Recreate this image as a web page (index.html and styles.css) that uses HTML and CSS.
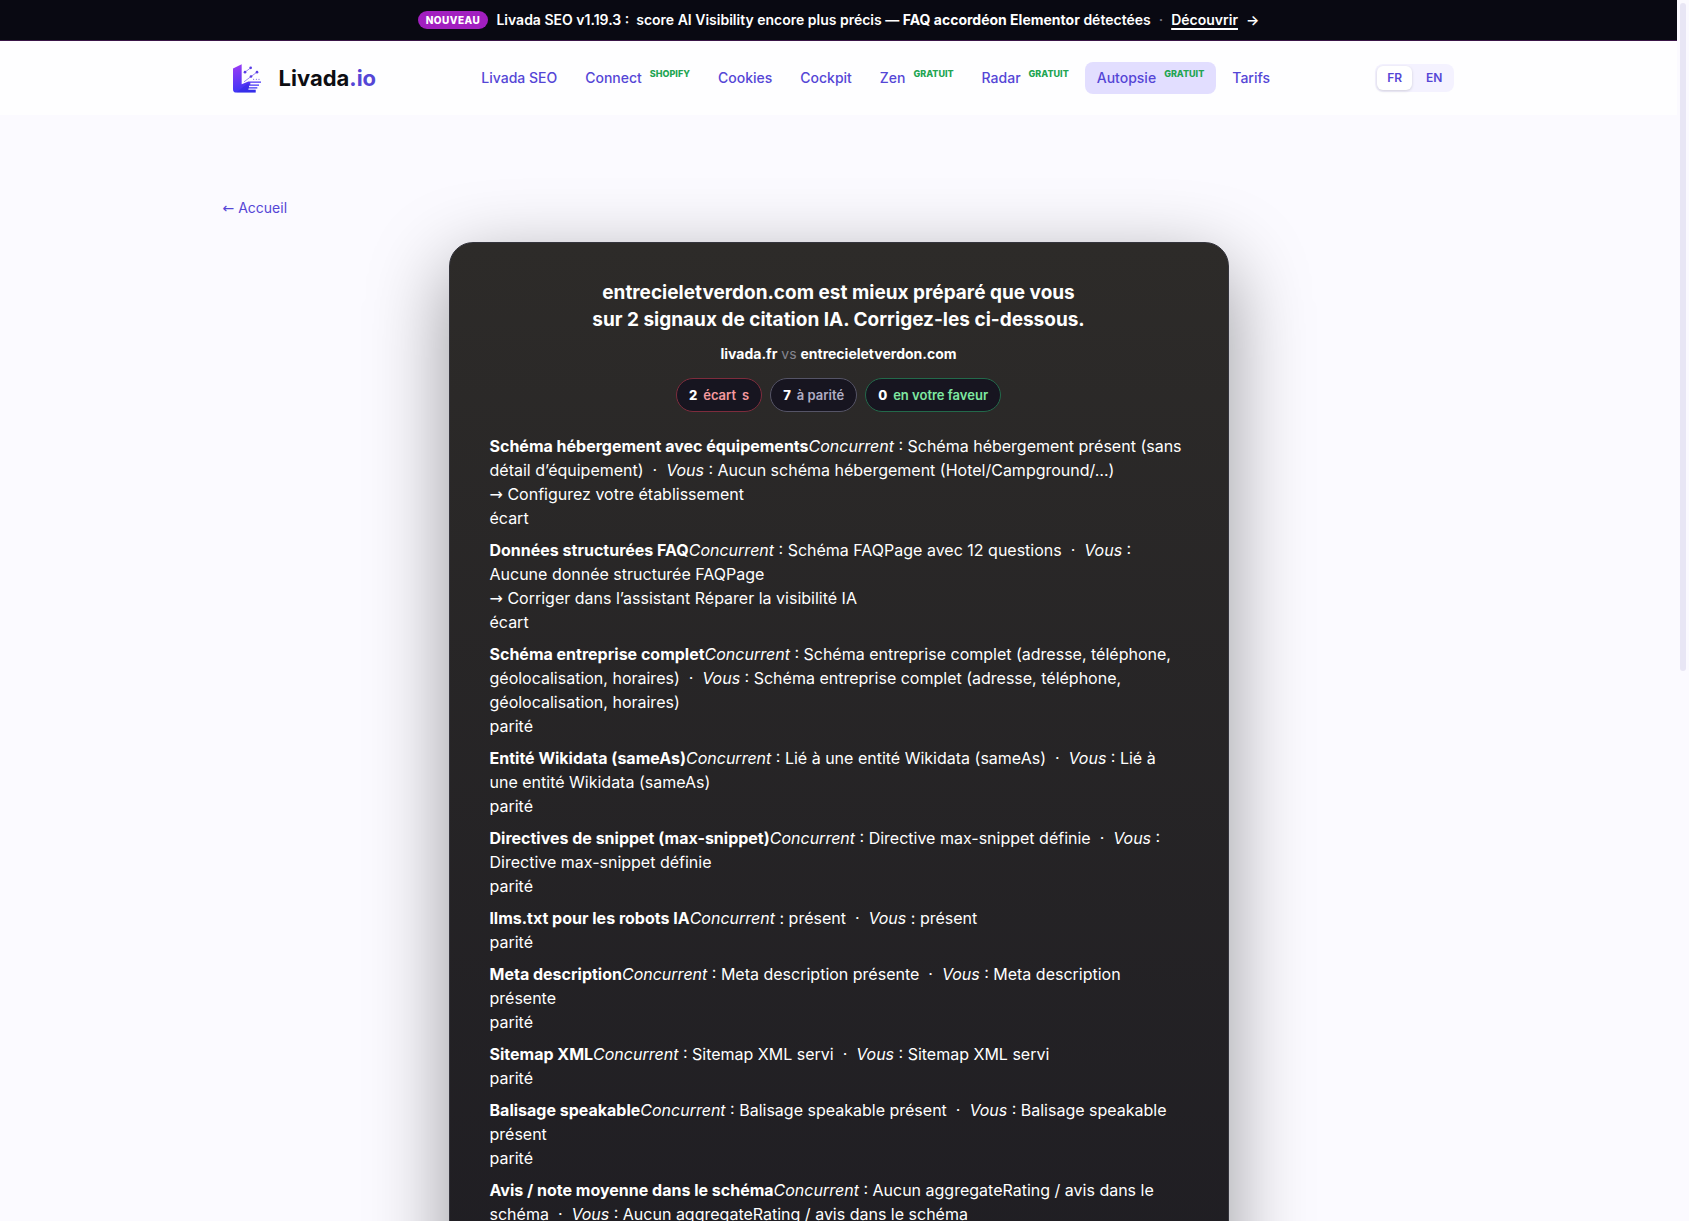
FILE: index.html
```html
<!DOCTYPE html>
<html lang="fr">
<head>
    <meta charset="UTF-8">
    <meta name="viewport" content="width=device-width, initial-scale=1.0">
    <title>Livada.io - Autopsie</title>
    <link rel="stylesheet" href="styles.css">
</head>
<body>
<div class="page">
    <div class="promo">
        <span class="promo-tag">NOUVEAU</span>
        <span class="promo-text">Livada SEO v1.19.3 :&nbsp; score AI Visibility encore plus précis — <strong>FAQ accordéon Elementor</strong> détectées</span>
        <span class="promo-dot">·</span>
        <a class="promo-link" href="#">Découvrir</a>
        <span class="promo-arrow">→</span>
    </div>

    <header class="header">
        <div class="container header-inner">
            <a class="logo" href="#">
                <svg class="logo-mark" viewBox="0 0 84 86" aria-hidden="true">
                    <defs>
                        <linearGradient id="mark" x1="0" y1="0" x2="0.3" y2="1">
                            <stop offset="0" stop-color="#a03cf5"/>
                            <stop offset="1" stop-color="#3a35f5"/>
                        </linearGradient>
                    </defs>
                    <path fill="url(#mark)" d="M0 13L26 0V60L46 52H84V56H52V61H78V65H48V69H73V73H46V77H68V85H10Q0 85 0 75Z"/>
                    <path fill="#2a1fd0" opacity=".3" d="M10 85L44 58L50 61L46 77H68V85Z"/>
                    <g fill="none" stroke="#6a4bea" stroke-width="2">
                        <path d="M36 24L53 11M54 37L72 24M33 53L54 37"/>
                    </g>
                    <g fill="#5a3ee6">
                        <circle cx="36" cy="24" r="4"/>
                        <circle cx="53" cy="11" r="4"/>
                        <circle cx="72" cy="24" r="4"/>
                        <circle cx="54" cy="37" r="4"/>
                        <circle cx="62" cy="45" r="1.6"/>
                        <circle cx="70" cy="45" r="1.6"/>
                        <circle cx="78" cy="45" r="1.6"/>
                    </g>
                </svg>
                <span class="logo-text">Livada<span class="logo-tld">.io</span></span>
            </a>
            <nav class="nav">
                <a href="#">Livada SEO</a>
                <a href="#">Connect<span class="nav-tag">SHOPIFY</span></a>
                <a href="#">Cookies</a>
                <a href="#">Cockpit</a>
                <a href="#">Zen<span class="nav-tag">GRATUIT</span></a>
                <a href="#">Radar<span class="nav-tag">GRATUIT</span></a>
                <a class="active" href="#">Autopsie<span class="nav-tag">GRATUIT</span></a>
                <a href="#">Tarifs</a>
            </nav>
            <div class="lang">
                <button class="lang-btn selected" type="button">FR</button>
                <button class="lang-btn" type="button">EN</button>
            </div>
        </div>
    </header>

    <main class="container main">
        <a class="back" href="#"><span class="arrow">←</span> Accueil</a>

        <section class="card">
            <h1>entrecieletverdon.com est mieux préparé que vous<br>sur 2 signaux de citation IA. Corrigez-les ci-dessous.</h1>
            <p class="versus"><strong>livada.fr</strong> vs <strong>entrecieletverdon.com</strong></p>
            <div class="pills">
                <span class="pill gap"><b>2</b><span>écart</span><span>s</span></span>
                <span class="pill even"><b>7</b><span>à parité</span></span>
                <span class="pill ahead"><b>0</b><span>en votre faveur</span></span>
            </div>

            <ul class="signals">
                <li>
                    <strong>Schéma hébergement avec équipements</strong><em>Concurrent</em> : Schéma hébergement présent (sans détail d’équipement) &nbsp;·&nbsp; <em>Vous</em> : Aucun schéma hébergement (Hotel/Campground/…)
                    <div><span class="arrow">→</span> Configurez votre établissement</div>
                    <div>écart</div>
                </li>
                <li>
                    <strong>Données structurées FAQ</strong><em>Concurrent</em> : Schéma FAQPage avec 12 questions &nbsp;·&nbsp; <em>Vous</em> : Aucune donnée structurée FAQPage
                    <div><span class="arrow">→</span> Corriger dans l’assistant Réparer la visibilité IA</div>
                    <div>écart</div>
                </li>
                <li>
                    <strong>Schéma entreprise complet</strong><em>Concurrent</em> : Schéma entreprise complet (adresse, téléphone, géolocalisation, horaires) &nbsp;·&nbsp; <em>Vous</em> : Schéma entreprise complet (adresse, téléphone, géolocalisation, horaires)
                    <div>parité</div>
                </li>
                <li>
                    <strong>Entité Wikidata (sameAs)</strong><em>Concurrent</em> : Lié à une entité Wikidata (sameAs) &nbsp;·&nbsp; <em>Vous</em> : Lié à une entité Wikidata (sameAs)
                    <div>parité</div>
                </li>
                <li>
                    <strong>Directives de snippet (max-snippet)</strong><em>Concurrent</em> : Directive max-snippet définie &nbsp;·&nbsp; <em>Vous</em> : Directive max-snippet définie
                    <div>parité</div>
                </li>
                <li>
                    <strong>llms.txt pour les robots IA</strong><em>Concurrent</em> : présent &nbsp;·&nbsp; <em>Vous</em> : présent
                    <div>parité</div>
                </li>
                <li>
                    <strong>Meta description</strong><em>Concurrent</em> : Meta description présente &nbsp;·&nbsp; <em>Vous</em> : Meta description présente
                    <div>parité</div>
                </li>
                <li>
                    <strong>Sitemap XML</strong><em>Concurrent</em> : Sitemap XML servi &nbsp;·&nbsp; <em>Vous</em> : Sitemap XML servi
                    <div>parité</div>
                </li>
                <li>
                    <strong>Balisage speakable</strong><em>Concurrent</em> : Balisage speakable présent &nbsp;·&nbsp; <em>Vous</em> : Balisage speakable présent
                    <div>parité</div>
                </li>
                <li>
                    <strong>Avis / note moyenne dans le schéma</strong><em>Concurrent</em> : Aucun aggregateRating / avis dans le schéma &nbsp;·&nbsp; <em>Vous</em> : Aucun aggregateRating / avis dans le schéma
                </li>
            </ul>
        </section>
    </main>
</div>
<div class="rail" aria-hidden="true">
    <div class="rail-thumb"></div>
</div>
</body>
</html>
```

FILE: styles.css
```css
* {
    box-sizing: border-box;
}
body {
    display: flex;
    height: 100vh;
    margin: 0;
    font-family: Inter, "Liberation Sans", sans-serif;
    font-size: 16px;
    line-height: 24px;
    background: #fbfaff;
    color: #0d0d12;
}
a {
    color: #5546d6;
    text-decoration: none;
}

/* The page scrolls in its own box, next to the scroll rail */
.page {
    flex: 1;
    overflow-y: auto;
    scrollbar-width: none;
}
.rail {
    width: 12px;
    padding: 3px;
}
.rail-thumb {
    height: 55%;
    border-radius: 3px;
    background: #e8e6f5;
}
.container {
    max-width: 1280px;
    margin: 0 auto;
    padding: 0 24px;
}

/* Announcement bar */
.promo {
    display: flex;
    align-items: center;
    justify-content: center;
    gap: 8px;
    padding: 10px 16px;
    background: #090912;
    border-bottom: 1px solid #3a1548;
    color: #fff;
    font-size: 14px;
    font-weight: 600;
    line-height: 20px;
}
.promo strong {
    font-weight: 700;
}
.promo-tag {
    padding: 0 8px;
    border-radius: 9px;
    background: #a21fc0;
    font-size: 10px;
    font-weight: 800;
    line-height: 18px;
    letter-spacing: 0.05em;
}
.promo-dot {
    color: #777785;
}
.promo-link {
    color: #fff;
    text-decoration: underline;
    text-decoration-thickness: 2px;
    text-underline-offset: 3px;
}

/* Header */
.header {
    background: #fefeff;
}
.header-inner {
    display: flex;
    align-items: center;
    justify-content: space-between;
    height: 74px;
}
.logo {
    display: flex;
    align-items: center;
    gap: 18px;
    padding-left: 10px;
    color: #0d0d12;
}
.logo-mark {
    width: 28px;
    height: 29px;
}
.logo-text {
    font-size: 22px;
    font-weight: 700;
    line-height: 28px;
}
.logo-tld {
    color: #5546d6;
}
.nav {
    display: flex;
    gap: 4px;
}
.nav a {
    display: flex;
    gap: 8px;
    padding: 6px 12px;
    border-radius: 8px;
    font-size: 14px;
    font-weight: 500;
    line-height: 20px;
}
.nav a.active {
    background: #e2deff;
}
.nav-tag {
    color: #22a552;
    font-size: 9px;
    font-weight: 800;
    line-height: 12px;
}
.lang {
    display: flex;
    gap: 4px;
    padding: 2px;
    border-radius: 8px;
    background: #f4f2ff;
}
.lang-btn {
    padding: 0 10px;
    border: 0;
    border-radius: 6px;
    background: none;
    color: #5546d6;
    font-family: inherit;
    font-size: 12px;
    font-weight: 600;
    line-height: 24px;
}
.lang-btn.selected {
    background: #fff;
    box-shadow: 0 1px 3px rgba(0,0,0,0.15);
}

/* Content */
.main {
    padding-top: 82px;
    padding-bottom: 80px;
}
.back {
    display: block;
    font-size: 14px;
    line-height: 22px;
}
.arrow {
    font-family: "DejaVu Sans", sans-serif;
    line-height: 1;
}
.card {
    max-width: 780px;
    min-height: 155vh;
    margin: 23px auto 0;
    padding: 36px 40px;
    border: 1px solid #34343c;
    border-radius: 24px;
    background: linear-gradient(#2d2b29, #14131e);
    box-shadow: 0 24px 80px rgba(0,0,0,0.4);
    color: #fff;
}
.card h1 {
    margin: 0;
    font-size: 19px;
    font-weight: 700;
    line-height: 27px;
    text-align: center;
}
.versus {
    margin: 10px 0 0;
    color: #85858f;
    font-size: 14px;
    line-height: 22px;
    text-align: center;
}
.versus strong {
    color: #fff;
}
.pills {
    display: flex;
    justify-content: center;
    gap: 8px;
    margin-top: 13px;
}
.pill {
    display: flex;
    gap: 6px;
    padding: 6px 12px;
    border: 1px solid;
    border-radius: 17px;
    background: #171520;
    font-size: 13px;
    font-weight: 600;
    line-height: 20px;
}
.pill b {
    color: #fff;
    font-weight: 800;
}
.pill.gap {
    border-color: #7d2c3c;
    color: #f59a9f;
}
.pill.even {
    border-color: #555466;
    color: #b0aec4;
}
.pill.ahead {
    border-color: #23694a;
    color: #7fe8a0;
}
.signals {
    display: grid;
    gap: 8px;
    margin: 22px 0 0;
    padding: 0;
    list-style: none;
}
```
